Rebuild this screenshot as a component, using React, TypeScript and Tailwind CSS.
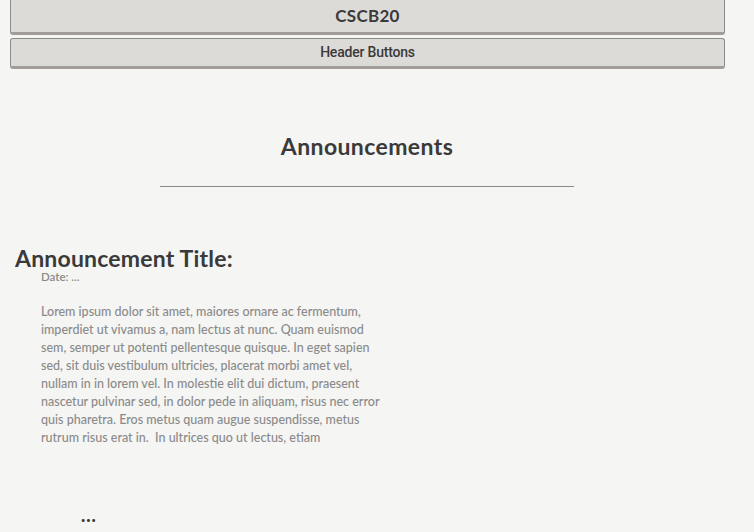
const lines = [
  'Lorem ipsum dolor sit amet, maiores ornare ac fermentum,',
  'imperdiet ut vivamus a, nam lectus at nunc. Quam euismod',
  'sem, semper ut potenti pellentesque quisque. In eget sapien',
  'sed, sit duis vestibulum ultricies, placerat morbi amet vel,',
  'nullam in in lorem vel. In molestie elit dui dictum, praesent',
  'nascetur pulvinar sed, in dolor pede in aliquam, risus nec error',
  'quis pharetra. Eros metus quam augue suspendisse, metus',
  'rutrum risus erat in.\u00a0 In ultrices quo ut lectus, etiam',
]

export default function App() {
  return (
    <div className="min-h-[532px] bg-[#f5f5f3] font-['Lato','Noto_Sans',sans-serif] text-[#3a3a3a]">
      <header className="box-content flex w-[715px] flex-col gap-[3px] pl-[10px]">
        <div className="flex h-[35px] items-center justify-center rounded-b-[3px] border border-t-0 border-[#8e8a86] border-b-[3px] border-b-[#a29d98] bg-[#dddbd7] text-[17px] font-bold tracking-[0.3px]">
          CSCB20
        </div>
        <div className="flex h-[31px] items-center justify-center rounded-[3px] border border-[#8e8a86] border-b-[3px] border-b-[#a29d98] bg-[#dddbd7] font-['Roboto',sans-serif] text-[14px] font-medium tracking-[-0.2px]">
          Header Buttons
        </div>
      </header>

      <section className="w-[734px] pt-[62px]">
        <h1 className="text-center text-[23px] font-bold leading-[30px] tracking-[0.4px]">Announcements</h1>
        <hr className="mx-auto mt-[25px] w-[414px] border-t border-[#8a8a8a]" />
      </section>

      <article className="pt-[61px]">
        <h2 className="pl-[15px] text-[23px] font-bold leading-[20px] tracking-[0.2px]">Announcement Title:</h2>
        <div className="pl-[41px] pt-[2px] text-[#8a8a8a]">
          <p className="text-[11.5px] font-semibold leading-[14px]">Date: ...</p>
          <div className="mt-[19px] text-[12.5px] font-medium leading-[18px]">
            {lines.map((l) => (
              <p key={l} className="whitespace-pre">{l}</p>
            ))}
          </div>
        </div>
        <p className="pl-[81px] pt-[60px] text-[18px] font-black leading-[16px] tracking-[1px]">...</p>
      </article>
    </div>
  )
}
